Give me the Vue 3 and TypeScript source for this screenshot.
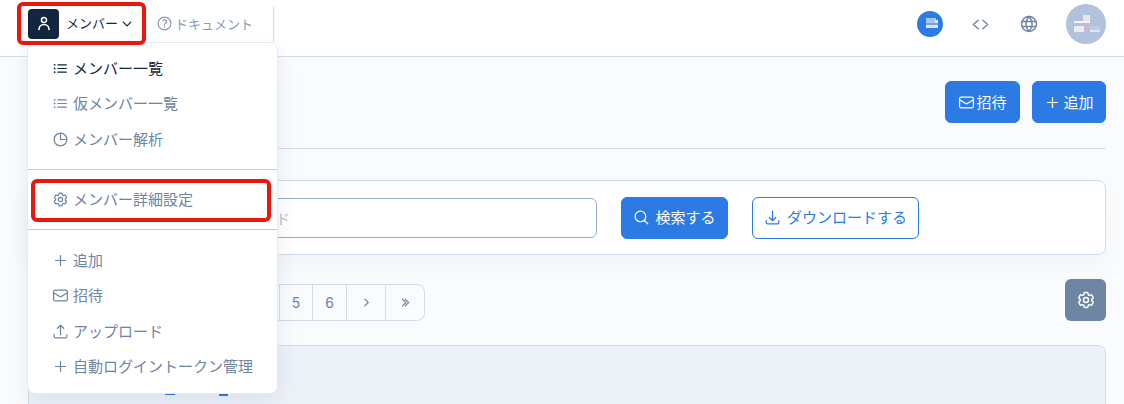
<script setup lang="ts">
const P = {
  list: 'M8.25 6.75h12M8.25 12h12m-12 5.25h12M3.75 6.75h.007v.008H3.75V6.75zm.375 0a.375.375 0 11-.75 0 .375.375 0 01.75 0zM3.75 12h.007v.008H3.75V12zm.375 0a.375.375 0 11-.75 0 .375.375 0 01.75 0zm-.375 5.25h.007v.008H3.75v-.008zm.375 0a.375.375 0 11-.75 0 .375.375 0 01.75 0z',
  pie: 'M21 12a9 9 0 11-18 0 9 9 0 0118 0zM12 3v9h9',
  cog: 'M9.594 3.94c.09-.542.56-.94 1.11-.94h2.593c.55 0 1.02.398 1.11.94l.213 1.281c.063.374.313.686.645.87.074.04.147.083.22.127.324.196.72.257 1.075.124l1.217-.456a1.125 1.125 0 011.37.49l1.296 2.247a1.125 1.125 0 01-.26 1.431l-1.003.827c-.293.24-.438.613-.431.992a6.759 6.759 0 010 .255c-.007.378.138.75.43.99l1.005.828c.424.35.534.954.26 1.43l-1.298 2.247a1.125 1.125 0 01-1.369.491l-1.217-.456c-.355-.133-.75-.072-1.076.124a6.57 6.57 0 01-.22.128c-.331.183-.581.495-.644.869l-.213 1.28c-.09.543-.56.941-1.11.941h-2.594c-.55 0-1.02-.398-1.11-.94l-.213-1.281c-.062-.374-.312-.686-.644-.87a6.52 6.52 0 01-.22-.127c-.325-.196-.72-.257-1.076-.124l-1.217.456a1.125 1.125 0 01-1.369-.49l-1.297-2.247a1.125 1.125 0 01.26-1.431l1.004-.827c.292-.24.437-.613.43-.992a6.932 6.932 0 010-.255c.007-.378-.138-.75-.43-.99l-1.004-.828a1.125 1.125 0 01-.26-1.43l1.297-2.247a1.125 1.125 0 011.37-.491l1.216.456c.356.133.751.072 1.076-.124.072-.044.146-.087.22-.128.332-.183.582-.495.644-.869l.214-1.281zM15 12a3 3 0 11-6 0 3 3 0 016 0z',
  plus: 'M12 5v14m7-7H5',
  mail: 'M21.75 6.75v10.5a2.25 2.25 0 01-2.25 2.25h-15a2.25 2.25 0 01-2.25-2.25V6.75m19.5 0A2.25 2.25 0 0019.5 4.5h-15a2.25 2.25 0 00-2.25 2.25m19.5 0v.243a2.25 2.25 0 01-1.07 1.916l-7.5 4.615a2.25 2.25 0 01-2.36 0L3.32 8.91a2.25 2.25 0 01-1.07-1.916V6.75',
  upload: 'M3 16.5v2.25A2.25 2.25 0 005.25 21h13.5A2.25 2.25 0 0021 18.75V16.5m-13.5-9L12 3m0 0l4.5 4.5M12 3v13.5',
  download: 'M3 16.5v2.25A2.25 2.25 0 005.25 21h13.5A2.25 2.25 0 0021 18.75V16.5M16.5 12L12 16.5m0 0L7.5 12m4.5 4.5V3',
  search: 'M21 21l-5.197-5.197m0 0A7.5 7.5 0 105.196 5.196a7.5 7.5 0 0010.607 10.607z',
  help: 'M9.879 7.519c1.171-1.025 3.071-1.025 4.242 0 1.172 1.025 1.172 2.687 0 3.712-.203.179-.43.326-.67.442-.745.361-1.45.999-1.45 1.827v.75M21 12a9 9 0 11-18 0 9 9 0 0118 0zm-9 5.25h.008v.008H12v-.008z',
  user: 'M15.75 6a3.75 3.75 0 11-7.5 0 3.75 3.75 0 017.5 0zM4.501 20.118a7.5 7.5 0 0114.998 0',
  chevron: 'M19.5 8.25l-7.5 7.5-7.5-7.5',
  code: 'M9 6.5L3 12l6 5.5M15 6.5l6 5.5-6 5.5',
  globe: 'M12 21a9 9 0 100-18 9 9 0 000 18zM3.6 9h16.8M3.6 15h16.8M12 3c-5 5.5-5 12.5 0 18M12 3c5 5.5 5 12.5 0 18',
  right: 'M8.25 4.5l7.5 7.5-7.5 7.5',
  left: 'M15.75 19.5L8.25 12l7.5-7.5',
  dright: 'M11.25 4.5l7.5 7.5-7.5 7.5m-6-15l7.5 7.5-7.5 7.5',
  dleft: 'M12.75 19.5l-7.5-7.5 7.5-7.5m6 15l-7.5-7.5 7.5-7.5'
}

interface Item { icon: string; label: string; active?: boolean }
const groupA: Item[] = [
  { icon: P.list, label: 'メンバー一覧', active: true },
  { icon: P.list, label: '仮メンバー一覧' },
  { icon: P.pie, label: 'メンバー解析' }
]
const groupB: Item[] = [{ icon: P.cog, label: 'メンバー詳細設定' }]
const groupC: Item[] = [
  { icon: P.plus, label: '追加' },
  { icon: P.mail, label: '招待' },
  { icon: P.upload, label: 'アップロード' },
  { icon: P.plus, label: '自動ログイントークン管理' }
]
const groups = [groupA, groupB, groupC]
const hiddenPages = ['1', '2', '3', '4']
</script>

<template>
  <div class="page">
    <header class="topbar">
      <div class="brand">
        <span class="brand-badge">
          <svg class="i16" viewBox="0 0 24 24"><path :d="P.user" /></svg>
        </span>
        <span class="brand-name">メンバー</span>
        <svg class="chev" viewBox="0 0 24 24"><path :d="P.chevron" /></svg>
      </div>
      <a class="doc">
        <svg class="i17" viewBox="0 0 24 24"><path :d="P.help" /></svg>ドキュメント
      </a>
      <span class="vline"></span>
      <div class="spacer"></div>
      <span class="round-blue">
        <svg viewBox="0 0 26 26" width="26" height="26" shape-rendering="crispEdges">
          <rect x="9" y="7" width="10" height="2" fill="#a9c6f2" />
          <rect x="9" y="9" width="9" height="3" fill="#a5c5f4" />
          <rect x="18" y="9" width="3" height="3" fill="#e6eefb" />
          <rect x="9" y="12" width="12" height="2" fill="#6ea2ec" />
          <rect x="9" y="14" width="12" height="3" fill="#dbe7fa" />
        </svg>
      </span>
      <svg class="ico-code" viewBox="0 0 24 24"><path :d="P.code" /></svg>
      <svg class="ico-globe" viewBox="0 0 24 24"><path :d="P.globe" /></svg>
      <span class="avatar">
        <svg viewBox="0 0 40 40" width="40" height="40" shape-rendering="crispEdges">
          <rect x="17" y="11" width="7" height="6" fill="#eee3e6" />
          <rect x="8" y="17" width="16" height="2" fill="#f6f5f5" />
          <rect x="8" y="22" width="10" height="6" fill="#e8edf4" />
          <rect x="18" y="22" width="6" height="6" fill="#c7b8d3" />
          <rect x="24" y="22" width="10" height="4" fill="#b9cbe8" />
          <rect x="24" y="26" width="10" height="2" fill="#dbe8f8" />
        </svg>
      </span>
    </header>

    <main class="content">
      <div class="head-row">
        <button class="btn primary head-btn">
          <svg class="i17" viewBox="0 0 24 24"><path :d="P.mail" /></svg>招待
        </button>
        <button class="btn primary head-btn add">
          <svg class="i17" viewBox="0 0 24 24"><path :d="P.plus" /></svg>追加
        </button>
      </div>

      <section class="search-card">
        <div class="input"><span class="placeholder">キーワード</span></div>
        <button class="btn primary search-btn">
          <svg class="i17" viewBox="0 0 24 24"><path :d="P.search" /></svg>検索する
        </button>
        <button class="btn outline">
          <svg class="i17" viewBox="0 0 24 24"><path :d="P.download" /></svg>ダウンロードする
        </button>
      </section>

      <div class="pager-row">
        <nav class="pager">
          <span class="cell wide"><svg class="i12" viewBox="0 0 24 24"><path :d="P.dleft" /></svg></span>
          <span class="cell wide"><svg class="i12" viewBox="0 0 24 24"><path :d="P.left" /></svg></span>
          <span v-for="n in hiddenPages" :key="n" class="cell hidden-num">{{ n }}</span>
          <span class="cell">5</span>
          <span class="cell six">6</span>
          <span class="cell wide"><svg class="i12" viewBox="0 0 24 24"><path :d="P.right" /></svg></span>
          <span class="cell wide"><svg class="i12" viewBox="0 0 24 24"><path :d="P.dright" /></svg></span>
        </nav>
        <button class="gear">
          <svg class="i20" viewBox="0 0 24 24"><path :d="P.cog" /></svg>
        </button>
      </div>

      <section class="table-card">
        <span class="th-mark one"></span>
        <span class="th-mark two"></span>
      </section>
    </main>

    <div class="menu">
      <template v-for="(group, g) in groups" :key="g">
        <hr v-if="g > 0" class="sep" />
        <a v-for="item in group" :key="item.label" class="item" :class="{ active: item.active }">
          <svg class="i17" viewBox="0 0 24 24"><path :d="item.icon" /></svg>
          <span>{{ item.label }}</span>
        </a>
      </template>
    </div>

    <div class="mark mark-top"></div>
    <div class="mark mark-menu"></div>
  </div>
</template>

<style scoped>
.page {
  position: relative;
  width: 1124px;
  height: 404px;
  overflow: hidden;
  background: #f9fbfd;
  color: #6e84a3;
  font-family: Inter, "Noto Sans CJK JP", sans-serif;
  font-size: 15px;
}
svg path {
  fill: none;
  stroke: currentColor;
  stroke-width: 1.75;
  stroke-linecap: round;
  stroke-linejoin: round;
}
.i16 { width: 16px; height: 16px; flex: none; }
.i17 { width: 17px; height: 17px; flex: none; }
.i20 { width: 20px; height: 20px; flex: none; }
.i12 { width: 11px; height: 11px; flex: none; }

.topbar {
  height: 56px;
  box-sizing: content-box;
  border-bottom: 1px solid #d2ddec;
  background: #fff;
  display: flex;
  align-items: center;
  padding: 0 18px 0 28px;
}
.brand { display: flex; align-items: center; height: 30px; margin-top: -8px; }
.brand-badge {
  width: 31px;
  height: 30px;
  background: #12263f;
  color: #fff;
  border-radius: 4px;
  display: flex;
  align-items: center;
  justify-content: center;
}
.brand-badge path { stroke-width: 2.4; }
.brand-name { margin-left: 7px; color: #12263f; font-size: 13px; padding-bottom: 3px; }
.chev { width: 12px; height: 12px; margin-left: 3px; color: #12263f; }
.chev path { stroke-width: 2.6; }
.doc {
  display: flex;
  align-items: center;
  gap: 2px;
  margin-left: 23px;
  margin-top: -10px;
  font-size: 13px;
  color: #8a9bb5;
}
.vline { width: 1px; height: 36px; background: #d2ddec; margin: -8px 0 0 20px; }
.spacer { flex: 1; }
.round-blue {
  width: 26px;
  height: 26px;
  border-radius: 50%;
  background: #2c7be5;
  margin-top: -8px;
  overflow: hidden;
}
.round-blue svg, .avatar svg { display: block; }
.round-blue svg rect, .avatar svg rect { stroke: none; }
.ico-code { width: 19px; height: 19px; margin: -8px 0 0 28px; color: #6e84a3; }
.ico-globe { width: 20px; height: 20px; margin: -8px 0 0 29px; color: #6e84a3; }
.avatar {
  width: 40px;
  height: 40px;
  border-radius: 50%;
  background: #b2c2dc;
  margin: -8px 0 0 27px;
  overflow: hidden;
}

.content { padding: 24px 18px 0 28px; }
.head-row {
  display: flex;
  justify-content: flex-end;
  gap: 12px;
  padding-bottom: 25px;
  box-sizing: content-box;
  border-bottom: 1px solid #d2ddec;
  height: 42px;
}
.btn {
  font: inherit;
  display: inline-flex;
  align-items: center;
  justify-content: center;
  gap: 1px;
  border-radius: 6px;
  border: 1px solid #2c7be5;
  padding: 0 0 2px;
  height: 42px;
}
.btn svg { margin-top: 2px; }
.primary { background: #2c7be5; color: #fff; }
.head-btn { width: 75px; }
.head-btn.add { width: 74px; gap: 2px; }
.outline { background: #fff; color: #2c7be5; width: 167px; margin-left: 24px; gap: 6px; }
.search-card {
  margin-top: 31px;
  height: 75px;
  box-sizing: border-box;
  background: #fff;
  border: 1px solid #d2ddec;
  border-radius: 8px;
  box-shadow: 0 12px 24px rgba(18, 38, 63, 0.03);
  display: flex;
  align-items: center;
  padding-left: 16px;
}
.input {
  flex: none;
  width: 552px;
  height: 40px;
  box-sizing: border-box;
  border: 1px solid #94adcf;
  border-radius: 6px;
  background: #fff;
  display: flex;
  align-items: center;
  justify-content: flex-end;
  padding-right: 306px;
}
.placeholder { color: #b1c2d9; font-size: 14px; }
.search-btn { width: 107px; margin-left: 24px; gap: 5px; }
.pager-row {
  display: flex;
  justify-content: space-between;
  align-items: flex-start;
  margin-top: 24px;
}
.pager {
  display: flex;
  height: 37px;
  margin-top: 5px;
  box-sizing: border-box;
  border: 1px solid #d2ddec;
  border-radius: 8px;
  overflow: hidden;
}
.cell {
  width: 32px;
  display: flex;
  align-items: center;
  justify-content: center;
  border-right: 1px solid #d2ddec;
  font-size: 14px;
  color: #6e84a3;
}
.cell:last-child { border-right: 0; }
.cell svg path { stroke-width: 2.6; }
.cell.six { width: 33px; }
.cell.wide { width: 38px; }
.cell.hidden-num { width: 42.25px; }
.gear {
  width: 41px;
  height: 42px;
  border: 0;
  border-radius: 6px;
  background: #6e84a3;
  color: #fff;
  display: flex;
  align-items: center;
  justify-content: center;
  padding: 0;
}
.table-card {
  position: relative;
  margin-top: 24px;
  height: 120px;
  box-sizing: border-box;
  background: #edf2f9;
  border: 1px solid #d2ddec;
  border-radius: 8px;
}
.th-mark { position: absolute; background: #2c7be5; }
.th-mark.one { left: 136px; top: 47px; width: 10px; height: 2px; }
.th-mark.two { left: 190px; top: 48px; width: 9px; height: 2px; }

.menu {
  position: absolute;
  left: 27px;
  top: 42px;
  width: 251px;
  height: 352px;
  box-sizing: border-box;
  background: #fff;
  border: 1px solid #e3ebf4;
  border-radius: 8px;
  box-shadow: 0 8px 24px rgba(18, 38, 63, 0.08);
  padding-top: 7.4px;
}
.item {
  display: flex;
  align-items: center;
  box-sizing: border-box;
  height: 35.5px;
  padding: 0 0 2px 24px;
  gap: 4px;
  color: #6e84a3;
  font-size: 15px;
  white-space: nowrap;
}
.item svg { margin-top: 2px; }
.item.active { color: #12263f; }
.sep {
  border: 0;
  border-top: 1px solid #bfcbdc;
  margin: 12px 0 12.1px;
}
.mark {
  position: absolute;
  border: 4px solid #e8190c;
  border-radius: 6px;
  box-sizing: border-box;
}
.mark-top { left: 17px; top: 2px; width: 129px; height: 43px; }
.mark-menu { left: 31px; top: 179px; width: 240px; height: 43px; }
</style>
